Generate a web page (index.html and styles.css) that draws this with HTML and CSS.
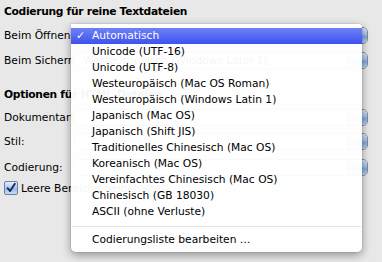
FILE: index.html
```html
<!DOCTYPE html>
<html lang="de">
<head>
  <meta charset="UTF-8" />
  <title>Öffnen und Sichern</title>
  <link rel="stylesheet" href="styles.css">
</head>
<body>

  <div class="prefs">
    <h3 class="section-title">Codierung für reine Textdateien</h3>
    <div class="row row-open">
      <span class="label">Beim Öffnen:</span>
      <div class="popup"><span class="popup-text"></span><span class="popup-cap"></span></div>
    </div>
    <div class="row row-save">
      <span class="label">Beim Sichern:</span>
      <div class="popup"><span class="popup-text">Westeuropäisch (Windows Latin 1)</span><span class="popup-cap"></span></div>
    </div>

    <h3 class="section-title section-html">Optionen für HTML-Dateien</h3>
    <div class="row row-type">
      <span class="label">Dokumentart:</span>
      <div class="popup"><span class="popup-text"></span><span class="popup-cap"></span></div>
    </div>
    <div class="row row-style">
      <span class="label">Stil:</span>
      <div class="popup"><span class="popup-text"></span><span class="popup-cap"></span></div>
    </div>
    <div class="row row-enc">
      <span class="label">Codierung:</span>
      <div class="popup"><span class="popup-text"></span><span class="popup-cap"></span></div>
    </div>
    <div class="check">
      <span class="checkbox">
        <svg width="14" height="14" viewBox="0 0 14 14">
          <path d="M3 7.2 L6 10.5 L11.5 2" fill="none" stroke="#1d2a55" stroke-width="2.2" stroke-linecap="round" stroke-linejoin="round"/>
        </svg>
      </span>
      <span>Leere Bereiche beibehalten</span>
    </div>
  </div>

  <ul class="menu">
    <li class="item selected"><span class="mark">✓</span>Automatisch</li>
    <li class="item">Unicode (UTF-16)</li>
    <li class="item">Unicode (UTF-8)</li>
    <li class="item">Westeuropäisch (Mac OS Roman)</li>
    <li class="item">Westeuropäisch (Windows Latin 1)</li>
    <li class="item">Japanisch (Mac OS)</li>
    <li class="item">Japanisch (Shift JIS)</li>
    <li class="item">Traditionelles Chinesisch (Mac OS)</li>
    <li class="item">Koreanisch (Mac OS)</li>
    <li class="item">Vereinfachtes Chinesisch (Mac OS)</li>
    <li class="item">Chinesisch (GB 18030)</li>
    <li class="item">ASCII (ohne Verluste)</li>
    <li class="separator"></li>
    <li class="item">Codierungsliste bearbeiten …</li>
  </ul>

</body>
</html>
```

FILE: styles.css
```css
* {
  margin: 0;
  padding: 0;
  box-sizing: border-box;
}
body {
  font-family: 'DejaVu Sans', sans-serif;
  font-size: 10.7px;
  color: #000;
  background: #e8e8e8;
  width: 382px;
  height: 262px;
  overflow: hidden;
  position: relative;
}
.prefs {
  padding: 4px 14px 0 4px;
}
.section-title {
  font-size: 10.7px;
  font-weight: bold;
  letter-spacing: -0.3px;
  line-height: 16px;
}
.section-html {
  margin-top: 18px;
}
.row {
  display: flex;
  align-items: center;
  height: 17px;
}
.row-open { margin-top: 7px; }
.row-save { margin-top: 8px; }
.row-type { margin-top: 6px; }
.row-style { margin-top: 7px; }
.row-enc { margin-top: 9px; }
.label {
  width: 70px;
  flex-shrink: 0;
  white-space: nowrap;
}
.popup {
  flex: 1;
  height: 17px;
  display: flex;
  align-items: center;
  background: linear-gradient(#ffffff, #f1f1f1 50%, #e6e6e6 51%, #fafafa);
  border: 1px solid #8a8a8a;
  border-radius: 5px;
  overflow: hidden;
}
.popup-text {
  flex: 1;
  padding-left: 8px;
  white-space: nowrap;
}
.popup-cap {
  width: 20px;
  height: 100%;
  border-left: 1px solid #5d78b0;
  background: linear-gradient(#d2e3f8, #a3c3ee 45%, #7ea6e2 55%, #b8d6f8);
}
.check {
  display: flex;
  align-items: center;
  gap: 3px;
  margin-top: 5px;
  height: 14px;
}
.checkbox {
  width: 14px;
  height: 14px;
  display: flex;
  align-items: center;
  justify-content: center;
  border: 1px solid #6d7fa8;
  border-radius: 2px;
  background: linear-gradient(#e6effb, #a9c6ec 50%, #8fb4e6 51%, #c8def7);
}

/* open popup menu */
.menu {
  position: absolute;
  left: 71px;
  top: 24px;
  width: 291px;
  padding: 4px 0;
  list-style: none;
  background: rgba(255, 255, 255, 0.96);
  border-radius: 0 4px 5px 5px;
  box-shadow: 0 3px 10px rgba(0, 0, 0, 0.38), 0 0 0 1px rgba(0, 0, 0, 0.06);
}
.item {
  position: relative;
  height: 16px;
  line-height: 16px;
  padding-left: 21px;
  white-space: nowrap;
}
.item.selected {
  color: #fff;
  background: linear-gradient(#6e82f7, #3e51ef);
}
.mark {
  position: absolute;
  left: 5px;
  top: 0;
  font-weight: bold;
}
.separator {
  height: 1px;
  margin: 6px 1px 5px;
  background: #e2e2e2;
}
```
